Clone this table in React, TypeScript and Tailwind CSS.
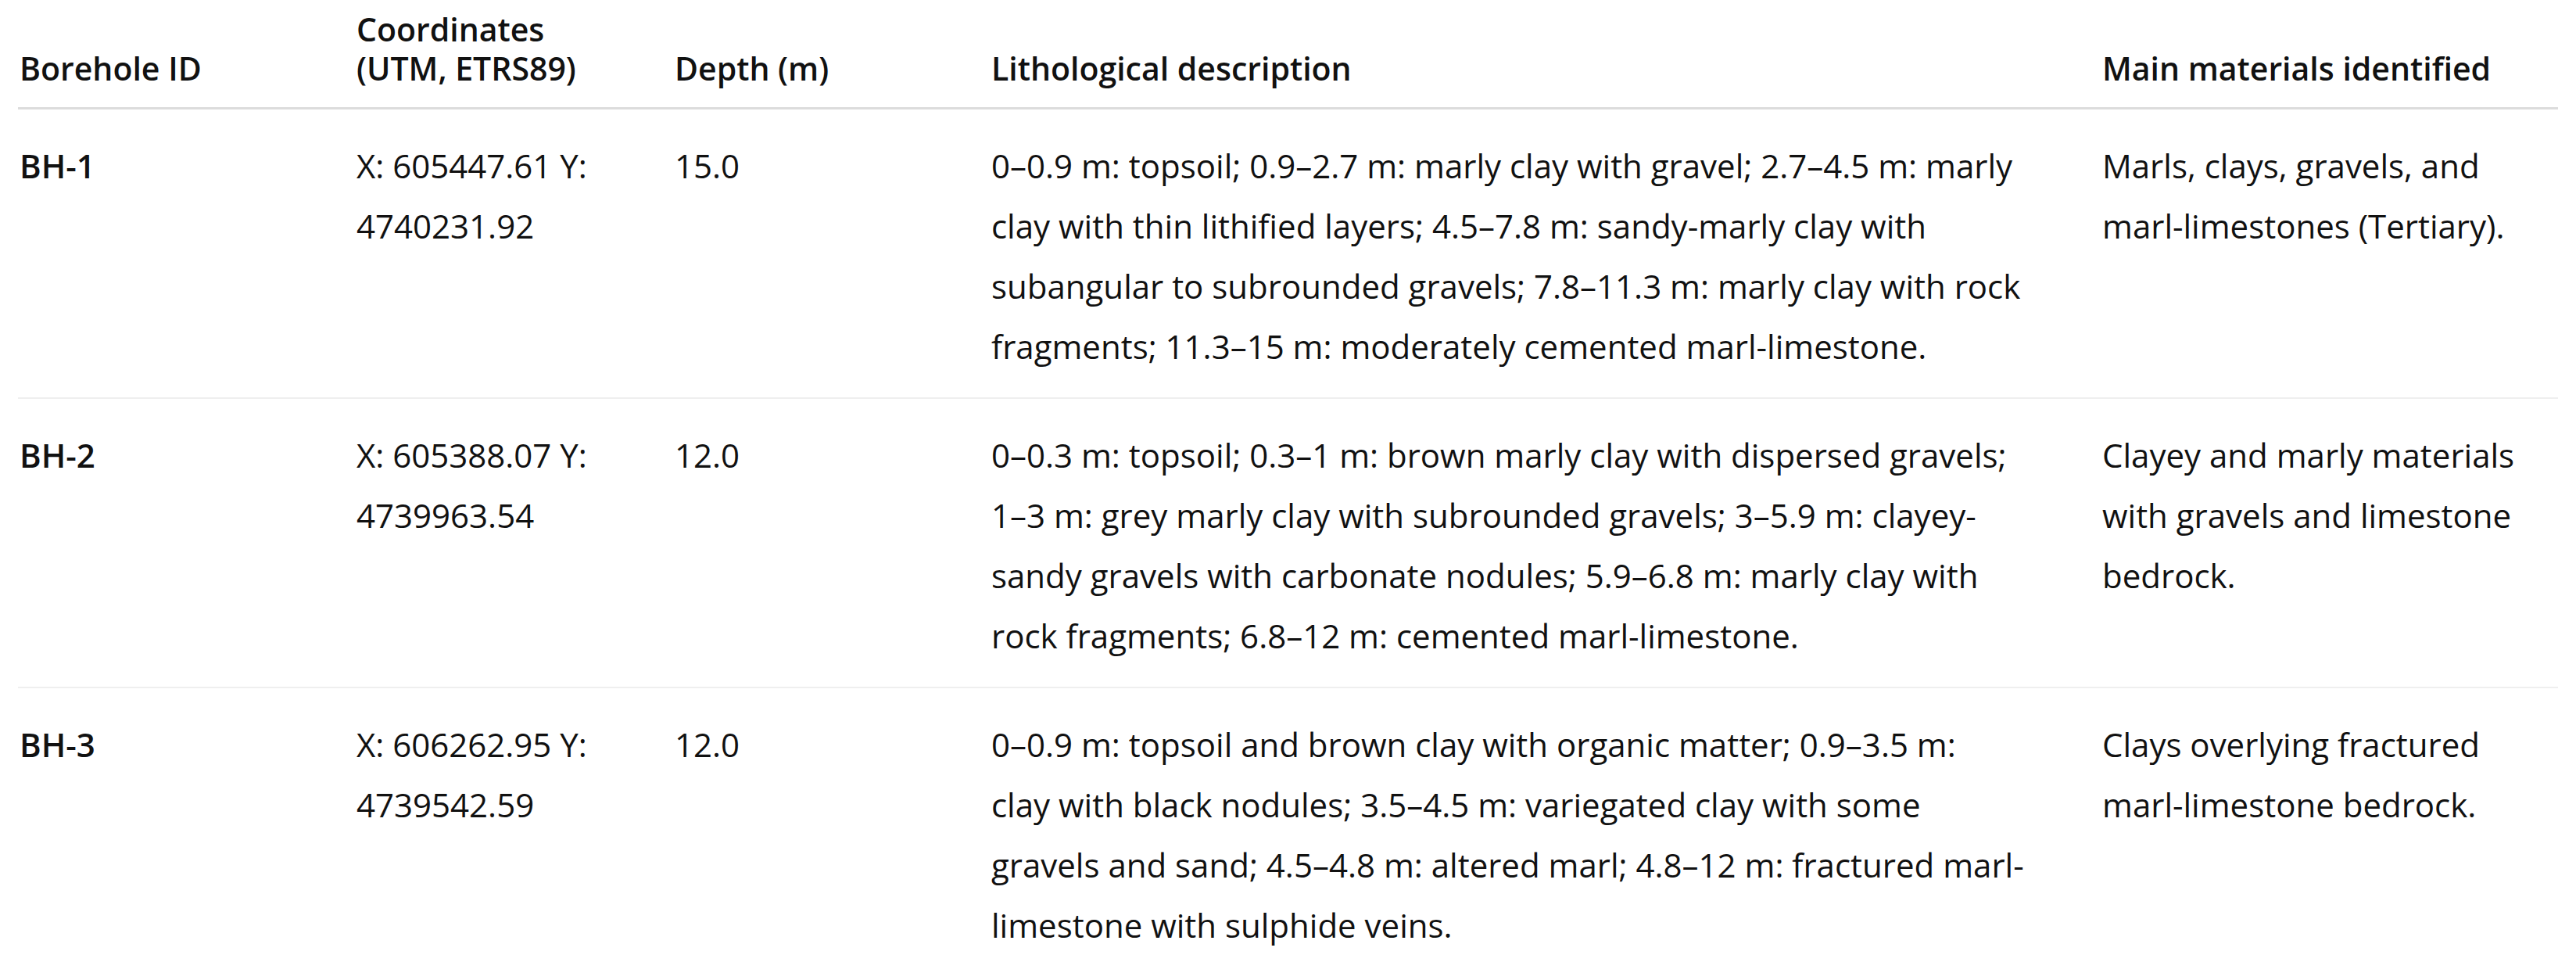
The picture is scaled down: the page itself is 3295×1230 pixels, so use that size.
import React from 'react'

type Row = {
  id: string
  coords: string[]
  depth: string
  description: string[]
  materials: string[]
}

const rows: Row[] = [
  {
    id: 'BH-1',
    coords: ['X: 605447.61 Y:', '4740231.92'],
    depth: '15.0',
    description: [
      '0–0.9 m: topsoil; 0.9–2.7 m: marly clay with gravel; 2.7–4.5 m: marly',
      'clay with thin lithified layers; 4.5–7.8 m: sandy-marly clay with',
      'subangular to subrounded gravels; 7.8–11.3 m: marly clay with rock',
      'fragments; 11.3–15 m: moderately cemented marl-limestone.',
    ],
    materials: ['Marls, clays, gravels, and', 'marl-limestones (Tertiary).'],
  },
  {
    id: 'BH-2',
    coords: ['X: 605388.07 Y:', '4739963.54'],
    depth: '12.0',
    description: [
      '0–0.3 m: topsoil; 0.3–1 m: brown marly clay with dispersed gravels;',
      '1–3 m: grey marly clay with subrounded gravels; 3–5.9 m: clayey-',
      'sandy gravels with carbonate nodules; 5.9–6.8 m: marly clay with',
      'rock fragments; 6.8–12 m: cemented marl-limestone.',
    ],
    materials: ['Clayey and marly materials', 'with gravels and limestone', 'bedrock.'],
  },
  {
    id: 'BH-3',
    coords: ['X: 606262.95 Y:', '4739542.59'],
    depth: '12.0',
    description: [
      '0–0.9 m: topsoil and brown clay with organic matter; 0.9–3.5 m:',
      'clay with black nodules; 3.5–4.5 m: variegated clay with some',
      'gravels and sand; 4.5–4.8 m: altered marl; 4.8–12 m: fractured marl-',
      'limestone with sulphide veins.',
    ],
    materials: ['Clays overlying fractured', 'marl-limestone bedrock.'],
  },
]

const Lines = ({ lines }: { lines: string[] }) => (
  <>
    {lines.map((l, i) => (
      <span key={i} className="block whitespace-nowrap">
        {l}
      </span>
    ))}
  </>
)

const App = () => {
  const th = 'align-bottom text-left font-semibold text-[41px] leading-[50px] pl-[2px] pt-[12px] pb-[25px] border-b-[3px] border-[#dcdcdc]'
  const td = 'align-top text-left pl-[2px] pt-[33px] pb-[27px] border-b-2 border-[#efefef]'

  return (
    <div className="w-[3295px] h-[1230px] overflow-hidden bg-white pl-[23px] font-['Open_Sans',sans-serif] text-[#111]">
      <table className="table-fixed border-collapse w-[3249px]">
        <colgroup>
          <col className="w-[431px]" />
          <col className="w-[407px]" />
          <col className="w-[405px]" />
          <col className="w-[1421px]" />
          <col className="w-[585px]" />
        </colgroup>
        <thead>
          <tr>
            <th className={th}>Borehole ID</th>
            <th className={th}>
              <Lines lines={['Coordinates', '(UTM, ETRS89)']} />
            </th>
            <th className={th}>Depth (m)</th>
            <th className={th}>Lithological description</th>
            <th className={th}>Main materials identified</th>
          </tr>
        </thead>
        <tbody className="text-[42px] leading-[77px]">
          {rows.map((r) => (
            <tr key={r.id}>
              <td className={`${td} font-semibold`}>{r.id}</td>
              <td className={td}>
                <Lines lines={r.coords} />
              </td>
              <td className={td}>{r.depth}</td>
              <td className={td}>
                <Lines lines={r.description} />
              </td>
              <td className={td}>
                <Lines lines={r.materials} />
              </td>
            </tr>
          ))}
        </tbody>
      </table>
    </div>
  )
}

export default App
